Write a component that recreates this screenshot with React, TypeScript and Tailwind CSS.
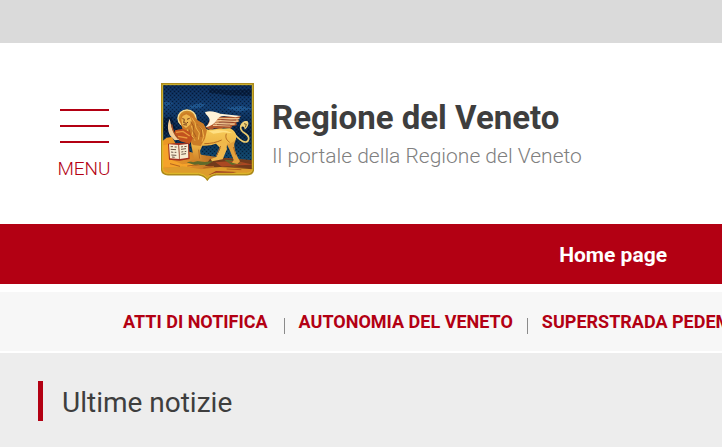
import React from 'react';

const newsLinks = [
  { name: 'ATTI DI NOTIFICA', path: '#atti', spacing: 'pr-4' },
  { name: 'AUTONOMIA DEL VENETO', path: '#autonomia', spacing: 'px-3.5' },
  { name: 'SUPERSTRADA PEDEMONTANA VENETA', path: '#superstrada', spacing: 'px-3.5' },
];

const Crest: React.FC = () => (
  <svg viewBox="33 24 279 294" className="w-[93px] shrink-0" role="img" aria-label="Leone di San Marco">
    <defs>
      <linearGradient id="sky" x1="0" y1="0" x2="0" y2="1">
        <stop offset="0" stopColor="#0a2750" />
        <stop offset="0.25" stopColor="#123d70" />
        <stop offset="0.5" stopColor="#06203f" />
        <stop offset="0.75" stopColor="#0f4468" />
      </linearGradient>
      <linearGradient id="ground" x1="0" y1="0" x2="1" y2="0">
        <stop offset="0" stopColor="#ee9a25" />
        <stop offset="0.4" stopColor="#d3862a" />
        <stop offset="1" stopColor="#6d3619" />
      </linearGradient>
      <linearGradient id="fur" x1="0" y1="0" x2="0" y2="1">
        <stop offset="0" stopColor="#f8cf5c" />
        <stop offset="0.5" stopColor="#eeb445" />
        <stop offset="1" stopColor="#cd7d25" />
      </linearGradient>
      <pattern id="weave" width="12" height="12" patternUnits="userSpaceOnUse">
        <path d="M0 0h3v3H0zM6 6h3v3H6z" fill="#010a1e" opacity=".6" />
        <path d="M6 0h3v3H6zM0 6h3v3H0z" fill="#2b568a" opacity=".3" />
      </pattern>
      <clipPath id="shield">
        <path d="M35 26H310V282Q310 298 291 299H199Q181 301 172 314Q163 301 145 299H54Q35 298 35 281Z" />
      </clipPath>
    </defs>
    <g clipPath="url(#shield)">
      <path d="M33 24H312V318H33Z" fill="url(#sky)" />
      <path d="M120 92l30-8 17 5-18 10-31 2zM225 98l48-5 35 8-41 9zM42 80l29 4-24 10z" fill="#24609a" opacity=".7" />
      <path d="M180 40l60 6 66-4v22l-70-3-60-8zM40 130l25-5 12 40-38 5z" fill="#020d22" opacity=".5" />
      <path d="M33 24H312V318H33Z" fill="url(#weave)" />

      {/* landscape */}
      <path d="M33 202l17-14 16-2 12 22 30 20 50 12 60 8 94 8v62H33z" fill="url(#ground)" />
      <path d="M35 212l20-4 12 48 30 12 60-8-40 18-82-3z" fill="#f5a32a" />
      <path d="M180 252l45-3 87 10v22l-60-7-44 4-43-6z" fill="#733a1b" />
      <path d="M196 262l60-5 54 12-44 2-50 4z" fill="#aa4822" />
      <path d="M110 262l25-5 30 4 25-3-18 11-36 2zM222 254l30 2-18 5 44 3-32 6z" fill="#5f6a2a" />
      <path d="M38 280l60-6 55 9 57-7 99 7v22l-140 12-95-16z" fill="#dd9c2c" />
      <path d="M176 300l22-12 62 3-30 9z" fill="#a34422" />
      <path d="M60 266l30 8m22-1l36-4m12 10l32-5m38 8l44 2" fill="none" stroke="#b56420" strokeWidth="3" />

      {/* tail */}
      <path d="M250 172C266 196 292 212 296 192C298 174 272 176 272 158C272 149 278 145 284 144" fill="none" stroke="#edcb6e" strokeWidth="5" />
      <path d="M272 156c0-13 10-21 21-17 5 8 1 18-9 25 0-8-4-12-12-8z" fill="#f0d27a" />
      <path d="M282 146l7 2-3 9" fill="none" stroke="#6d5524" strokeWidth="3" />

      {/* wing */}
      <path d="M168 158l7-14 8-17 90-4-9 10 4 6-10 4 3 8-14 2-4 8-22-3-8 5-20-3-12 5z" fill="#b0562b" />
      <path d="M165 111c19-5 30 0 46 5l62 7-16 4-34-4c-17-2-20 12-29 20-8 8-18 12-28 13 11-8 16-18 11-27-4-8-10-9-12-18z" fill="#fff3d8" />
      <path d="M203 130l65 1-70 7 67 0-71 7 60 2-65 4 52 2" fill="none" stroke="#f0c994" strokeWidth="3" />
      <path d="M214 134l44 1m-52 7l45 0m-50 7l40 1" fill="none" stroke="#7a2f1f" strokeWidth="2" />

      {/* halo */}
      <ellipse cx="111" cy="130" rx="28" ry="26" fill="#cf8a2a" />
      <ellipse cx="111" cy="130" rx="27" ry="25" fill="none" stroke="#f4dc95" strokeWidth="4" />

      {/* hind legs */}
      <path d="M222 192l35-8c3 14-6 20-4 30 1 14 6 27 17 45l-8 8-16-4 5-8-13-32z" fill="#e2a03c" />
      <path d="M192 200l42-9c-2 16-5 23-3 31l-13 31-32 6-4-7 17-6 12-26z" fill="#f0b84c" />

      {/* body and front leg */}
      <path d="M120 168l28-12 27 8 32-3 32-1c12 4 18 12 20 24 0 12-9 18-22 22l-26-4c-22 9-41 11-54 10l-7 16 5 27-26 7-9-4 12-8-8-38z" fill="url(#fur)" />
      <path d="M176 168l25-3 28 2 19 8-28-3-30 4z" fill="#ffe083" />
      <path d="M163 206c20 0 37-4 52-11m14-19c-4 12 1 20 10 26m-27 11l-13 30m51-27l8 25m-112-17l3 27" fill="none" stroke="#b56a20" strokeWidth="3" />

      {/* mane and face */}
      <path d="M90 137l4-17 16-8 17 6 16 18 18 10 10 20-6 25-13 22-23-3-14-20-16-23z" fill="#cb7c27" />
      <path d="M94 134l4-11 11-5 11 6 5 13-5 12-12 10-11-8z" fill="#efb850" />
      <path d="M97 131l7 2m7 0l8-3m-16 4l-2 9 9 2 4-4m-14 8l11 1" fill="none" stroke="#77401a" strokeWidth="3" />
      <path d="M125 128l10 15 3 16 10 15-3 20m-21-42l5 16-3 14 9 15m8-46l14 13 4 20-5 16m-44-37l2 15 9 12" fill="none" stroke="#f0b54a" strokeWidth="3" />
      <path d="M122 140l9 14-2 14 9 18m3-38l13 15-1 23m-35-22l3 17 11 12" fill="none" stroke="#924d19" strokeWidth="2" />

      {/* raised paw */}
      <path d="M75 166l24-5 20 10 9 20-9 16-28-8-18-14z" fill="#c2521f" />
      <path d="M59 131c-8 18-6 37 2 51l13 14 14-2c-17-15-24-37-29-63z" fill="#f3cd98" />
      <path d="M65 148c2 18 10 32 20 43" fill="none" stroke="#a84f22" strokeWidth="4" />
      <path d="M78 172l21-3 20 14m-35 1l28 5" stroke="#e99b3c" strokeWidth="4" fill="none" />

      {/* open book */}
      <path d="M54 206l30-2 33 1 2 47-30 5-32-3z" fill="#a5301f" />
      <path d="M57 208l28 2 3 42-28-2zM87 210l27-3 1 41-25 4z" fill="#f7ebd3" />
      <path d="M62 215h7m5 1h6m-18 7l16 1m-15 7l7 1m4 0h5m-15 8l15 1m-13 5l8 1M93 216l6-1m4 0l7-1m-17 9l15-2m-14 10l6-1m4 0l5-1m-15 9l14-2" stroke="#6b5548" strokeWidth="3" />
      <path d="M86 210l2 42" stroke="#9d6f4e" strokeWidth="2" />
    </g>
    <path d="M35 26H310V282Q310 298 291 299H199Q181 301 172 314Q163 301 145 299H54Q35 298 35 281Z" fill="none" stroke="#ad8b1c" strokeWidth="5" />
    <path d="M38 29H307V281Q307 294 290 295H197Q180 298 172 309Q164 298 146 295H55Q38 294 38 280Z" fill="none" stroke="#dfbd2b" strokeWidth="3" />
  </svg>
);

const App: React.FC = () => {
  return (
    <div className="min-h-screen bg-[#ededed] font-[Roboto,'Liberation_Sans',sans-serif]">
      <div className="h-[43px] bg-[#dadada]" />

      <header className="flex items-start bg-white pt-10 pb-[43px] pl-[57px]">
        <button className="mt-[26px] flex w-[54px] flex-col items-center text-[#b30013]">
          <span className="flex w-[49px] flex-col gap-[14px]">
            <span className="h-[2px] bg-[#b30013]" />
            <span className="h-[2px] bg-[#b30013]" />
            <span className="h-[2px] bg-[#b30013]" />
          </span>
          <span className="mt-[14px] text-[19px] leading-6 font-light">MENU</span>
        </button>
        <a href="#home" className="ml-[50px] flex items-start whitespace-nowrap">
          <Crest />
          <div className="ml-[18px] pt-[13px]">
            <h1 className="text-[33px] leading-[44px] font-bold text-[#3e3e3e]">Regione del Veneto</h1>
            <p className="text-[21px] leading-8 font-light text-[#808080]">Il portale della Regione del Veneto</p>
          </div>
        </a>
      </header>

      <nav className="flex h-[60px] items-center justify-end bg-[#b30013] pt-0.5 pr-[55px]">
        <a href="#home" className="text-[21px] leading-8 font-bold text-white">Home page</a>
      </nav>

      <nav className="overflow-hidden border-t-8 border-b-2 border-white bg-[#f7f7f7]">
        <ul className="flex h-[59px] items-center pl-[123px] text-[18px] leading-6 font-bold whitespace-nowrap text-[#b30013]">
          {newsLinks.map((link, index) => (
            <li key={link.name} className="flex items-end">
              {index > 0 && <span className="h-4 w-px bg-[#8b8b8b]" />}
              <a href={link.path} className={link.spacing}>{link.name}</a>
            </li>
          ))}
        </ul>
      </nav>

      <main className="px-[38px] py-7">
        <h2 className="border-l-[5px] border-[#b30013] pt-1 pl-[19px] text-[28px] leading-9 text-[#3e3e3e]">Ultime notizie</h2>
      </main>
    </div>
  );
};

export default App;
